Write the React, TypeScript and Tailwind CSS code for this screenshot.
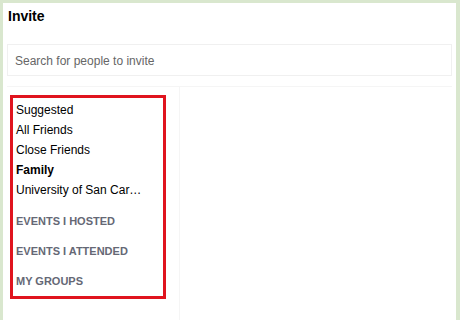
export default function App() {
  const items = [
    { t: "Suggested", b: false },
    { t: "All Friends", b: false },
    { t: "Close Friends", b: false },
    { t: "Family", b: true },
    { t: "University of San Car…", b: false },
  ];
  const heads = ["EVENTS I HOSTED", "EVENTS I ATTENDED", "MY GROUPS"];
  return (
    <div
      className="w-[460px] h-[320px] bg-white border-t-[3px] border-l-[3px] border-r-[4px] border-[#d9e7ce] overflow-hidden flex flex-col"
      style={{ fontFamily: '"Liberation Sans", Arial, sans-serif' }}
    >
      <div className="h-[41px] pt-[5px] pl-[5px] text-[14px] leading-[16px] font-bold text-black">Invite</div>
      <div className="ml-[4px] w-[445px] h-[32px] border border-[#f0f0f0] flex items-center pl-[7px] pt-[2px] text-[12px] text-[#666666]">
        Search for people to invite
      </div>
      <div className="ml-[4px] w-[445px] mt-[10px] border-t border-[#f5f5f5] flex-1 flex">
        <div className="w-[173px] border-r border-[#f5f5f5] pt-[8px] pl-[3px]">
          <div className="w-[156px] h-[204px] border-[3px] border-[#e0141e] pt-[2px] pl-[3px]">
            {items.map((i) => (
              <div
                key={i.t}
                className={`h-[20px] leading-[20px] text-[12px] text-black ${i.b ? "font-bold" : ""}`}
              >
                {i.t}
              </div>
            ))}
            <div className="mt-[6px]">
              {heads.map((h) => (
                <div key={h} className="h-[30px] leading-[30px] text-[11px] font-bold text-[#656875]">
                  {h}
                </div>
              ))}
            </div>
          </div>
        </div>
        <div className="flex-1" />
      </div>
    </div>
  );
}
